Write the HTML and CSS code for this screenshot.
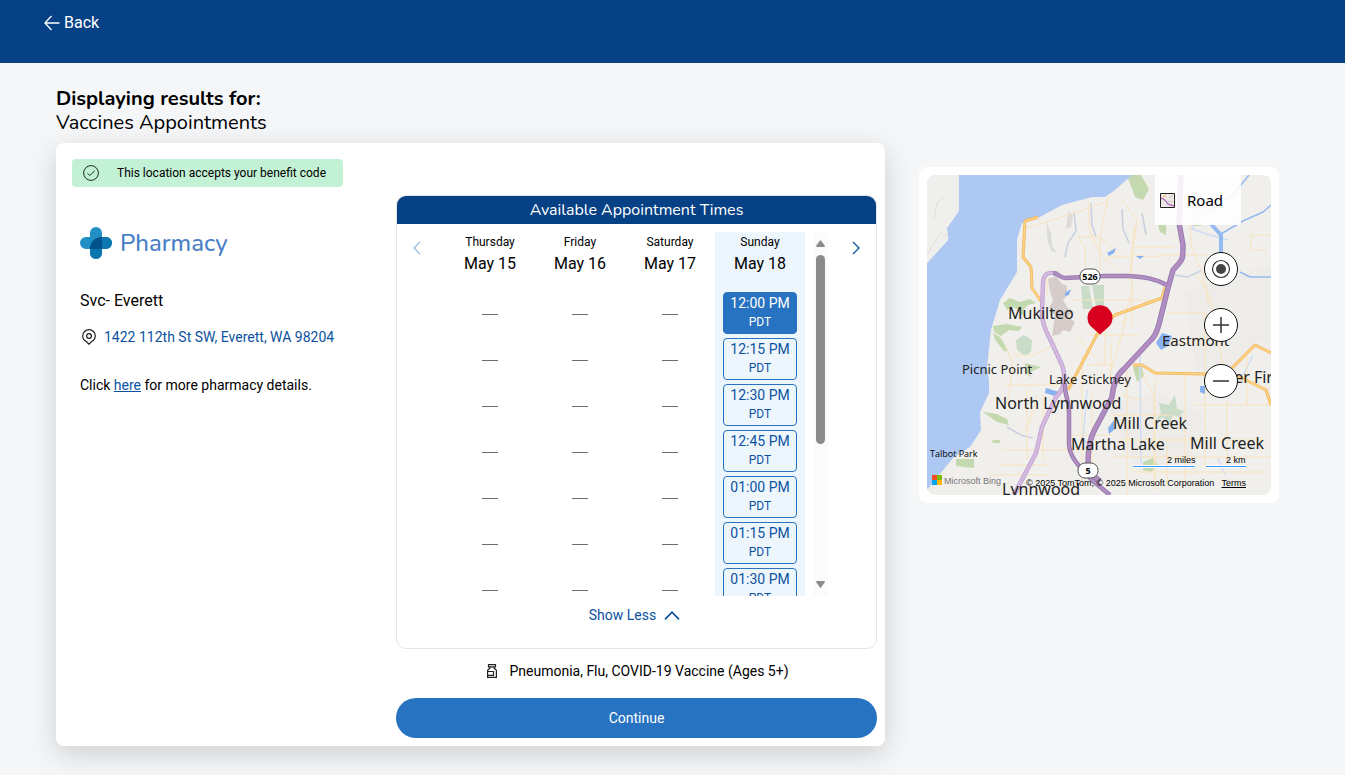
FILE: index.html
```html
<!DOCTYPE html>
<html lang="en">
<head>
<meta charset="utf-8">
<meta name="viewport" content="width=device-width, initial-scale=1">
<title>Vaccines Appointments</title>
<link rel="stylesheet" href="styles.css">
</head>
<body>
<header class="topbar">
  <button class="back" type="button">
    <svg width="16" height="16" viewBox="0 0 16 16" fill="none" stroke="currentColor" stroke-width="1.3" aria-hidden="true"><path d="M15.5 8H1M7.5 1L1 8l6.500 7"/></svg>
    Back
  </button>
</header>
<main class="page">
  <h1 class="title">Displaying results for:</h1>
  <p class="subtitle">Vaccines Appointments</p>
  <div class="results">
    <article class="card">
      <section class="place">
        <p class="benefit">
          <svg width="16" height="16" viewBox="0 0 16 16" fill="none" stroke="#1c2b22" aria-hidden="true"><circle cx="8" cy="8" r="7.400"/><path d="M4.500 8.400l2.300 2L11.800 5.800"/></svg>
          <span>This location accepts your benefit code</span>
        </p>
        <div class="logo">
          <svg width="32" height="32" viewBox="0 0 32 32" aria-hidden="true">
            <path fill="#1f8fc4" d="M10 10V6a6 6 0 0 1 12 0v4h4a6 6 0 0 1 0 12h-4v4a6 6 0 0 1-12 0v-4H6a6 6 0 0 1 0-12z"/>
            <path fill="#0a77b0" d="M22 10h4a6 6 0 0 1 0 12h-4v4a6 6 0 0 1-12 0v-4C10 15 15 10 22 10z"/>
            <path fill="#01518a" d="M22 10v12H10C10 15 15 10 22 10z"/>
          </svg>
          <span>Pharmacy</span>
        </div>
        <h2 class="name">Svc- Everett</h2>
        <a class="address" href="#map">
          <svg width="14" height="16" viewBox="0 0 14 16" fill="none" stroke="#222" stroke-width="1.200" aria-hidden="true"><path d="M7 15.200L4.300 12.600C2 11.300.700 9.300.700 7a6.300 6.300 0 0 1 12.600 0c0 2.300-1.300 4.300-3.600 5.600z"/><circle cx="7" cy="7" r="2.400"/></svg>
          1422 112th St SW, Everett, WA 98204
        </a>
        <p class="more">Click <a href="#details">here</a> for more pharmacy details.</p>
      </section>
      <section class="booking">
        <div class="times">
          <h2 class="times-title">Available Appointment Times</h2>
          <div class="schedule">
            <button class="step step-off" type="button" aria-label="Earlier days" disabled>
              <svg width="8" height="14" viewBox="0 0 8 14" fill="none" stroke="currentColor" stroke-width="1.300"><path d="M7 1L1 7l6 6"/></svg>
            </button>
            <div class="days">
              <div class="day">
                <div class="weekday">Thursday</div><div class="date">May 15</div>
                <div class="none"></div><div class="none"></div><div class="none"></div><div class="none"></div><div class="none"></div><div class="none"></div><div class="none"></div>
              </div>
              <div class="day">
                <div class="weekday">Friday</div><div class="date">May 16</div>
                <div class="none"></div><div class="none"></div><div class="none"></div><div class="none"></div><div class="none"></div><div class="none"></div><div class="none"></div>
              </div>
              <div class="day">
                <div class="weekday">Saturday</div><div class="date">May 17</div>
                <div class="none"></div><div class="none"></div><div class="none"></div><div class="none"></div><div class="none"></div><div class="none"></div><div class="none"></div>
              </div>
              <div class="day day-current">
                <div class="weekday">Sunday</div><div class="date">May 18</div>
                <button class="slot slot-selected" type="button">12:00 PM <small>PDT</small></button>
                <button class="slot" type="button">12:15 PM <small>PDT</small></button>
                <button class="slot" type="button">12:30 PM <small>PDT</small></button>
                <button class="slot" type="button">12:45 PM <small>PDT</small></button>
                <button class="slot" type="button">01:00 PM <small>PDT</small></button>
                <button class="slot" type="button">01:15 PM <small>PDT</small></button>
                <button class="slot" type="button">01:30 PM <small>PDT</small></button>
              </div>
            </div>
            <div class="scrollbar" aria-hidden="true">
              <svg width="9" height="7" viewBox="0 0 9 7"><path fill="#8b8b8b" d="M4 .5Q4.500 0 5 .5L9 6Q9 7 8 7H1Q0 7 0 6z"/></svg>
              <div class="track"><div class="thumb"></div></div>
              <svg width="9" height="7" viewBox="0 0 9 7"><path fill="#8b8b8b" d="M4 6.500Q4.500 7 5 6.500L9 1Q9 0 8 0H1Q0 0 0 1z"/></svg>
            </div>
            <button class="step" type="button" aria-label="Later days">
              <svg width="8" height="14" viewBox="0 0 8 14" fill="none" stroke="currentColor" stroke-width="1.300"><path d="M1 1l6 6-6 6"/></svg>
            </button>
          </div>
          <button class="toggle" type="button">Show Less
            <svg width="16" height="9" viewBox="0 0 16 9" fill="none" stroke="currentColor" stroke-width="1.700" aria-hidden="true"><path d="M1 8.300L8 1.200l7 7.100"/></svg>
          </button>
        </div>
        <p class="vaccines">
          <svg width="10" height="14" viewBox="0 0 10 14" fill="none" stroke="#222" stroke-width="1.200" aria-hidden="true"><path d="M1.500.6h7v2.200h-7zM2.500 2.800l.5 1.200L.6 6.200v7.200h8.800V6.200L7 4l.5-1.200M.6 7.500h5.900v3.800H.6"/></svg>
          Pneumonia, Flu, COVID-19 Vaccine (Ages 5+)
        </p>
        <button class="continue" type="button">Continue</button>
      </section>
    </article>
    <aside class="map-card" id="map">
      <svg class="map" viewBox="0 0 344 320" role="img" aria-label="Map of Everett">
        <rect width="344" height="320" fill="#f0efec"/>
        <path fill="#eceae6" d="M257 116L344 90v80l-16-4-18 28-40 4zM182 230l50-12 46 22-8 44-60 12z" opacity=".6"/>
        <g fill="#d6cdca"><path d="M121 104l8-3 6 8 5 2v10l-4 4 5 8 5 3-5 6 7 5-5 10-7-2-3 4-8 2 3-20-6-8 4-8-3-8z"/></g>
        <g fill="#dcdbd7"><path d="M119 45l5 14 1 12 5 7-6-3-3-8zM141 36l5 4-2 12-5 2z"/></g>
        <g fill="#c5d9b0"><path d="M76 128l7-5 10 4 10-3 6 4-8 2-6 6-9-4-6 3zM66 151l14-2 15 3-3 4-10-1-8 6-7-4zM88 130l8 4 3 7-6-2zM66 158l7 4 8 13-3 2-10-12zM98 188l16 4-12 6 3 5-7-6zM56 237l14 2 10 5 2 6-12-3zM65 265h8v3h-7zM29 284h18v9l-18-2zM200 0h14l8 14-6 11-8-3zM231 50l8-1v11l-6-3zM264 48h10v3h-8zM206 192l8-3 3 12-7 6zM216 287l10-4 6 8-8 6-8-2z"/><path fill="#c8dcc8" d="M154 111h8l4 23h-10zM165 110h12v25l-8-3zM89 165l8-5 8 5-1 12-6 4-8-6zM232 228l10 2 6-10 2 14 7 2-5 6-6-2-4 10-6-8-8 4 6-8z"/></g>
        <g fill="none" stroke="#c8d0de" stroke-width="1.500"><path d="M147 37l2 19-8 12-3 14M164 28l1 22 4 12M195 34l1 20 6 14M215 38l4 22M80 252l14 8 12 3M248 100l12 2 14-6"/><path stroke="#cfdcf4" d="M268 15l3 17-6 22 18 6 18 5M160 215l-4 48 4 6M213 180l1 110M298 300l-7-16M326 180l-10 20"/></g>
        <g fill="none" stroke="#f9e3bd" stroke-width="1"><path d="M99 53l24-7 24-8 34-12M151 62h22v34M151 62l7 10v22M161 26l2 30 10 22 18 18M185 0l-5 28-7 34 20 20M195 25l15 20-8 60M208 50l-4 30 28 2M208 72h38M181 82h24v70M206 110l-10 40M120 103v17M145 125h95M240 138h38v60M231 168h40M184 168v50M78 170l8 20-6 40M86 180h22l22-12M78 210h54M100 215v70M116 220v65M76 275h90M72 290h50M62 300h60M155 180v130M165 215v80M145 260h40M200 190v130M215 200l12 20v90M228 205v110M184 240h60M190 265h150M186 282h158M205 297h135M258 200v110M278 200v90M300 225v70M268 230h76M240 270v40M262 20l2 50 12 30 6 30M270 100l12 20 7 30M344 60h-20v15h15M250 45h40M230 80h50M200 142l-18 60M195 220l20 5M110 220l-8 30-10 10M320 180v50M292 164l4 30M150 162l25 28M178 130v60M162 160h50M160 190h28"/></g>
        <g fill="#adc8f3"><path d="M0 88L21 65l-1-12 12-18V0h173l-17 15-10 7h-13l-30 8-24 13-16 5-5 17 0 32-17 28-9 30-4 38 2 12v13l-9 19 1 18-11 17-17 11L0 315z"/><path fill="#87b1ef" d="M180 78l9-5-2 5-5 3zM209 81l8 0-4 3zM229 168l6-10 10 3-4 10-7 4zM119 213l13 4-1 5-13-4zM181 253l6-8 1 9-6 5zM273 211h5v8l-5-2zM138 118l6-4-2 6-4 1z"/></g>
        <path fill="#efefed" d="M0 0h32v36L20 53l1 12L0 88z"/>
        <path fill="none" stroke="#e0dfdc" d="M22 62l-8-4-3 4-11 18M18 22l-8 6-3 16"/>
        <g fill="none" stroke="#94baf2" stroke-width="4"><path d="M284 49l10 11v18"/><path stroke-width="1.500" d="M294 59l22-13 20-9 8-7M276 40l30-20 16-20M313 97l10 5h21"/></g>
        <g fill="none" stroke-linejoin="round">
          <g stroke="#f0b45a" stroke-width="3"><path d="M111 42l-13 4-2 36 8 10 1 21 9 13M238 112l-3 11-47 17-13 10-34 65M206 190h9l13 8 50 1 23-2 27-27 16 8M301 200l14 3 24 12 5 15"/></g>
          <g stroke="#ffd584" stroke-width="1.500"><path d="M111 42l-13 4-2 36 8 10 1 21 9 13M238 112l-3 11-47 17-13 10-34 65M206 190h9l13 8 50 1 23-2 27-27 16 8M301 200l14 3 24 12 5 15"/></g>
          <path stroke="#c3a5d3" stroke-width="4.500" d="M131 99c-10-3-14 0-15 8l-1 31c0 12 5 20 8 26l12 26c5 14 2 24-6 32l-14 30-6 26-22 42"/>
          <path stroke="#d5bae0" stroke-width="2.500" d="M131 99c-10-3-14 0-15 8l-1 31c0 12 5 20 8 26l12 26c5 14 2 24-6 32l-14 30-6 26-22 42"/>
          <g stroke="#9a7db1" stroke-width="4.500"><path d="M126 98c5 0 7 5 12 5l40-2h23c18 1 28 3 39 9M138 208c-1 12 4 16 4 28v32c0 16 14 27 24 38l17 14"/><path stroke-width="5.500" d="M254 0l-2 48 4 22c0 16 0 14-10 25l-5 18-9 36q-3 12-9 17l-26 28q-10 8-12 28l-18 34c-5 10-6 24-6 32 0 8 6 14 12 18"/></g>
          <g stroke="#b18dc1" stroke-width="2.500"><path d="M126 98c5 0 7 5 12 5l40-2h23c18 1 28 3 39 9M138 208c-1 12 4 16 4 28v32c0 16 14 27 24 38l17 14"/><path stroke-width="3.500" d="M254 0l-2 48 4 22c0 16 0 14-10 25l-5 18-9 36q-3 12-9 17l-26 28q-10 8-12 28l-18 34c-5 10-6 24-6 32 0 8 6 14 12 18"/></g>
        </g>
        <g fill="#fff" stroke="#555"><rect x="153" y="94" width="20" height="15" rx="7"/><rect x="151" y="288" width="20" height="15" rx="7"/></g>
        <g class="shield"><text x="163" y="105">526</text><text x="161" y="299">5</text></g>
        <path fill="#d9001f" d="M173 159.500l-9-8a12.500 12.500 0 1 1 18 0z"/>
        <g class="town"><text x="81" y="144">Mukilteo</text><text x="68" y="234">North Lynnwood</text><text x="186" y="254">Mill Creek</text><text x="144" y="275">Martha Lake</text><text x="263" y="274">Mill Creek</text><text x="75" y="320">Lynnwood</text><text x="299" y="208">ver Firs</text></g>
        <g class="suburb"><text class="medium" x="235" y="171">Eastmont</text><text x="35" y="199">Picnic Point</text><text x="122" y="209">Lake Stickney</text></g>
        <text class="hamlet" x="3" y="282">Talbot Park</text>
        <path fill="#f25022" d="M5 300h5v5H5z"/><path fill="#7fba00" d="M10 300h5v5h-5z"/><path fill="#00a4ef" d="M5 305h5v5H5z"/><path fill="#ffb900" d="M10 305h5v5h-5z"/>
        <g class="fine"><text class="brand" x="17" y="309">Microsoft Bing</text><text x="99" y="311">© 2025 TomTom, © 2025 Microsoft Corporation</text><text x="240" y="288">2 miles</text><text x="299" y="288">2 km</text></g>
        <path stroke="#fff" stroke-width="3" d="M206 291.500h62M279 291.500h40"/><path stroke="#3594ff" stroke-width="1" d="M206 291.500h62M279 291.500h40"/>
      </svg>
      <button class="map-type" type="button">
        <svg width="15" height="15" viewBox="0 0 15 15" aria-hidden="true"><path fill="#eee9e5" stroke="#222" d="M.5.5h14v14H.5z"/><path fill="none" stroke="#ffad55" d="M3 4l3-2"/><path fill="none" stroke="#c9c5c0" d="M9 5l4-3M8 8l5 1"/><path fill="none" stroke="#b57bc6" stroke-width="1.500" d="M1 5l4 2 3 4 6 2"/></svg>
        Road
      </button>
      <div class="map-tools">
        <button type="button" aria-label="Locate me"><svg width="20" height="20" viewBox="0 0 20 20"><circle cx="10" cy="10" r="8.500" fill="none" stroke="#333" stroke-width="1.200"/><circle cx="10" cy="10" r="5" fill="#444"/></svg></button>
        <button type="button" aria-label="Zoom in"><svg width="18" height="18" viewBox="0 0 18 18"><path stroke="#333" stroke-width="1.500" d="M1 9h16M9 1v16"/></svg></button>
        <button type="button" aria-label="Zoom out"><svg width="18" height="18" viewBox="0 0 18 18"><path stroke="#333" stroke-width="1.500" d="M1 9h16"/></svg></button>
      </div>
      <a class="terms" href="#terms">Terms</a>
    </aside>
  </div>
</main>
</body>
</html>
```
FILE: styles.css
```css
* { box-sizing: border-box; }
body { margin: 0; background: #f4f6f8; color: #000; font: 14px/20px Roboto, sans-serif; }
button { font: inherit; color: inherit; border: 0; padding: 0; background: none; cursor: pointer; }
a { color: #0d52a0; }
h1, h2, p { margin: 0; }
svg { flex: none; display: block; }

.topbar { min-height: 63px; padding: 12px 44px; background: #064185; color: #fff; }
.back { display: flex; align-items: center; gap: 4px; font-size: 16px; line-height: 21px; }

.page { padding: 24px 66px 29px 56px; }
.title, .subtitle { font: 700 20px/24px "Nunito", "Open Sans", sans-serif; }
.subtitle { font-weight: 400; margin-bottom: 8px; }
.results { display: grid; grid-template-columns: minmax(0, 1fr) 360px; gap: 34px; align-items: start; }

.card { display: grid; grid-template-columns: minmax(0, 1fr) 481px; padding: 16px 8px 8px 16px; border-radius: 8px; background: #fff; box-shadow: 0 8px 28px rgba(0, 0, 0, .16); }
.place { display: flex; flex-direction: column; align-items: flex-start; }
.benefit { display: flex; align-items: center; gap: 18px; width: 271px; height: 28px; padding: 0 11px; border-radius: 4px; background: #c3f1d5; font-size: 12px; }
.logo { display: flex; align-items: center; gap: 8px; margin: 40px 8px 0; color: #4a7fc7; font: 500 24px/32px "Nunito", Lato, sans-serif; }
.name { margin: 32px 8px 0; font-size: 16px; line-height: 20px; font-weight: 400; }
.address { display: flex; align-items: center; gap: 8px; margin: 16px 10px 0; text-decoration: none; }
.more { margin: 28px 8px 0; }

.booking { padding-top: 36px; }
.times { display: flex; flex-direction: column; min-height: 454px; border: 1px solid #e3e5e7; border-radius: 10px; overflow: hidden; }
.times-title { background: #064185; color: #fff; text-align: center; font: 400 16px/28px "Nunito", Lato, sans-serif; }
.schedule { display: grid; grid-template-columns: 48px minmax(0, 1fr) 15px 48px; height: 372px; padding-top: 8px; }
.step { align-self: start; display: grid; place-items: center; height: 32px; margin: 0 8px 0 16px; color: #0d52a0; justify-self: center; }
.step-off { color: #9dbbe3; margin: 0 8px 0 0; }
.days { display: grid; grid-template-columns: repeat(4, 1fr); margin-right: 8px; overflow: hidden; }
.day { text-align: center; }
.day-current { background: #eef6fd; }
.weekday { font-size: 12px; line-height: 20px; }
.date { height: 40px; font-size: 16px; line-height: 23px; }
.none { height: 46px; padding-top: 22px; }
.none::before { content: ""; display: block; width: 16px; height: 1px; margin: 0 auto; background: #6c6e74; }
.slot { display: block; width: 74px; height: 42px; margin: 0 auto 4px; border: 1px solid #2873bf; border-radius: 4px; background: #eef6fd; color: #0d52a0; line-height: 18px; }
.slot small { display: block; font-size: 12px; line-height: 20px; }
.slot-selected { background: #2873c1; color: #fff; }
.scrollbar { display: flex; flex-direction: column; align-items: center; justify-content: space-between; padding: 8px 0; background: #fbfbfb; }
.track { flex: 1; width: 9px; padding: 8px 0; }
.thumb { width: 9px; height: 189px; border-radius: 5px; background: #8b8b8b; }
.toggle { display: flex; align-items: center; gap: 8px; align-self: center; margin: 9px 4px 0 0; color: #0d52a0; }

.vaccines { display: flex; align-items: center; justify-content: center; gap: 12px; height: 44px; padding-left: 3px; }
.continue { display: block; width: 100%; height: 40px; margin-top: 5px; border-radius: 20px; background: #2873c1; color: #fff; }

.map-card { position: relative; margin-top: 24px; padding: 8px; border-radius: 8px; background: #fff; }
.map { width: 100%; border-radius: 8px; }
.map-type { position: absolute; top: 8px; right: 38px; display: flex; align-items: center; gap: 12px; width: 86px; height: 50px; padding-left: 5px; background: rgba(255, 255, 255, .88); font: 15px/20px "Noto Sans", sans-serif; }
.map-tools { position: absolute; top: 85px; right: 41px; display: grid; gap: 22px; }
.map-tools button { display: grid; place-items: center; width: 34px; height: 34px; border: 1px solid #111; border-radius: 50%; background: #fff; }
.town { font: 16px "Noto Sans", sans-serif; fill: #222; }
.suburb { font: 13px "Noto Sans", sans-serif; fill: #222; }
.suburb .medium { font-size: 15px; }
.hamlet { font: 9px "Open Sans", sans-serif; }
.shield { font: 700 9px "Open Sans", sans-serif; text-anchor: middle; }
.fine { font: 9px "Liberation Sans", sans-serif; }
.fine .brand { fill: #777; }
.terms { position: absolute; right: 33px; bottom: 14px; color: #000; font: 9px/12px "Liberation Sans", sans-serif; }
```
